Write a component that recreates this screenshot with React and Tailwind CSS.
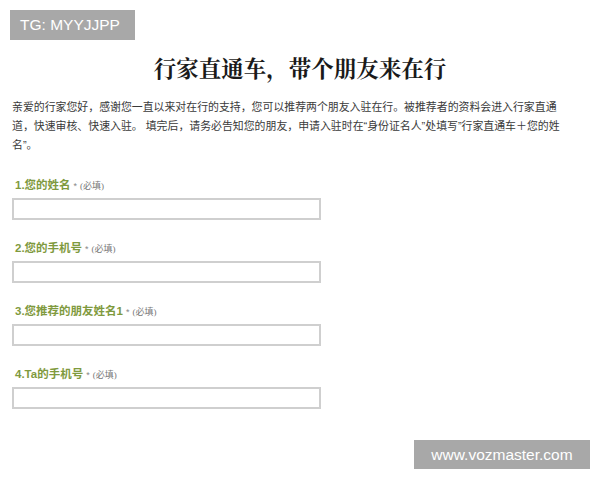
const fields = [
  { label: '1.您的姓名' },
  { label: '2.您的手机号' },
  { label: '3.您推荐的朋友姓名1' },
  { label: '4.Ta的手机号' },
];

export default function App() {
  return (
    <div className="relative w-[600px] h-[480px] bg-white overflow-hidden font-['Liberation_Sans','Noto_Sans_CJK_SC',sans-serif]">
      {/* watermark top */}
      <div className="absolute left-[10px] top-[10px] w-[125px] h-[30px] bg-[#a8a8a8] text-white text-[15.5px] flex items-center pl-[10px]">
        TG: MYYJJPP
      </div>

      <div className="pt-[53px]">
        <h1 className="text-center text-[22.5px] leading-[28px] font-bold text-[#1a1a1a] font-['Noto_Serif_CJK_SC','Noto_Sans_CJK_SC',serif]">
          行家直通车，带个朋友来在行
        </h1>

        <p className="mt-[17px] mx-[12px] text-[10.9px] leading-[19px] text-[#3a3a3a] whitespace-nowrap">
          亲爱的行家您好，感谢您一直以来对在行的支持，您可以推荐两个朋友入驻在行。被推荐者的资料会进入行家直通
          <br />
          道，快速审核、快速入驻。 填完后，请务必告知您的朋友，申请入驻时在“身份证名人”处填写”行家直通车＋您的姓
          <br />
          名”。
        </p>

        <div className="mt-[22px] flex flex-col gap-[20px] pl-[12px]">
          {fields.map((f) => (
            <div key={f.label} className="flex flex-col">
              <div className="pl-[3px] flex items-baseline gap-[3px] h-[20px]">
                <span className="text-[11.5px] font-bold text-[#7f9a3e]">{f.label}</span>
                <span className="text-[9px] text-[#888]">*</span>
                <span className="text-[9px] text-[#777] font-['Liberation_Serif','Noto_Sans_CJK_SC',serif]">(必填)</span>
              </div>
              <div className="mt-[1px] w-[309px] h-[22px] border-2 border-[#cfcfcf] bg-white"></div>
            </div>
          ))}
        </div>
      </div>

      {/* watermark bottom */}
      <div className="absolute left-[414px] top-[440px] w-[176px] h-[29px] bg-[#a8a8a8] text-white text-[15.5px] flex items-center justify-center">
        www.vozmaster.com
      </div>
    </div>
  );
}
